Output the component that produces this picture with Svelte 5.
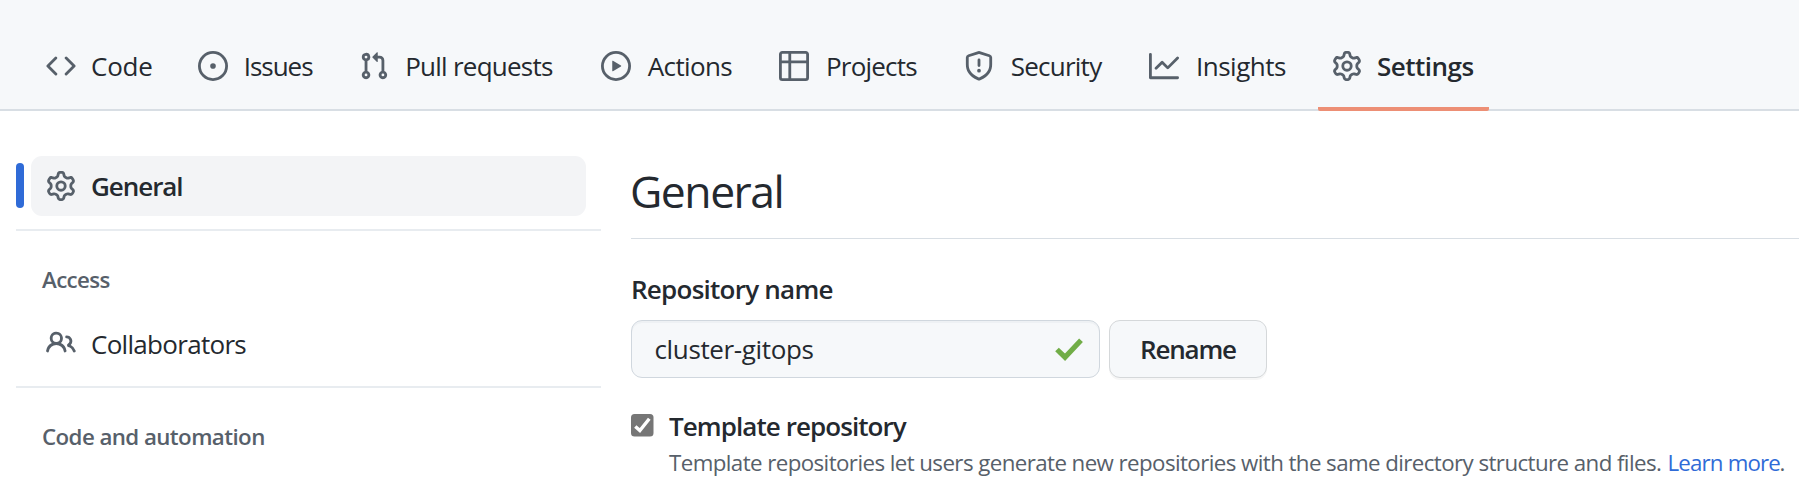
<script>
  const icons = {
    code: 'M4.72 3.22a.75.75 0 011.06 1.06L2.06 8l3.72 3.72a.75.75 0 11-1.06 1.06L.47 8.53a.75.75 0 010-1.06l4.25-4.25zm6.56 0a.75.75 0 10-1.06 1.06L13.94 8l-3.72 3.72a.75.75 0 101.06 1.06l4.25-4.25a.75.75 0 000-1.06l-4.25-4.25z',
    issue: 'M8 9.5a1.5 1.5 0 100-3 1.5 1.5 0 000 3zM8 0a8 8 0 100 16A8 8 0 008 0zM1.5 8a6.5 6.5 0 1113 0 6.5 6.5 0 01-13 0z',
    pull: 'M7.177 3.073L9.573.677A.25.25 0 0110 .854v4.792a.25.25 0 01-.427.177L7.177 3.427a.25.25 0 010-.354zM3.75 2.5a.75.75 0 100 1.5.75.75 0 000-1.5zm-2.25.75a2.25 2.25 0 113 2.122v5.256a2.251 2.251 0 11-1.5 0V5.372A2.25 2.25 0 011.5 3.25zM11 2.5h-1V4h1a1 1 0 011 1v5.628a2.251 2.251 0 101.5 0V5A2.5 2.5 0 0011 2.5zm1 10.25a.75.75 0 111.5 0 .75.75 0 01-1.5 0zM3.75 12a.75.75 0 100 1.5.75.75 0 000-1.5z',
    play: 'M1.5 8a6.5 6.5 0 1113 0 6.5 6.5 0 01-13 0zM8 0a8 8 0 100 16A8 8 0 008 0zM6.379 5.227A.25.25 0 006 5.442v5.117a.25.25 0 00.379.214l4.264-2.559a.25.25 0 000-.428L6.379 5.227z',
    table: 'M0 1.75C0 .784.784 0 1.75 0h12.5C15.216 0 16 .784 16 1.75v12.5A1.75 1.75 0 0114.25 16H1.75A1.75 1.75 0 010 14.25V1.75zM1.5 6.5v7.75c0 .138.112.25.25.25H5v-8H1.5zM5 5H1.5V1.75a.25.25 0 01.25-.25H5V5zm1.5 1.5v8h7.75a.25.25 0 00.25-.25V6.5h-8zm8-1.5h-8V1.5h7.75a.25.25 0 01.25.25V5z',
    shield: 'M7.467.133a1.75 1.75 0 011.066 0l5.25 1.68A1.75 1.75 0 0115 3.48V7c0 1.566-.32 3.182-1.303 4.682-.983 1.498-2.585 2.813-5.032 3.855a1.7 1.7 0 01-1.33 0c-2.447-1.042-4.049-2.357-5.032-3.855C1.32 10.182 1 8.566 1 7V3.48a1.75 1.75 0 011.217-1.667l5.25-1.68zm.61 1.429a.25.25 0 00-.153 0l-5.25 1.68a.25.25 0 00-.174.238V7c0 1.358.275 2.666 1.057 3.86.784 1.194 2.121 2.34 4.366 3.297a.2.2 0 00.154 0c2.245-.956 3.582-2.104 4.366-3.298C13.225 9.666 13.5 8.36 13.5 7V3.48a.25.25 0 00-.174-.237l-5.25-1.68zM9 10.5a1 1 0 11-2 0 1 1 0 012 0zm-.25-5.75a.75.75 0 10-1.5 0v3a.75.75 0 001.5 0v-3z',
    graph: 'M1.5 1.75a.75.75 0 00-1.5 0v12.5c0 .414.336.75.75.75h14.5a.75.75 0 000-1.5H1.5V1.75zm14.28 2.53a.75.75 0 00-1.06-1.06L10 7.94 7.53 5.47a.75.75 0 00-1.06 0L3.22 8.72a.75.75 0 001.06 1.06L7 7.06l2.47 2.47a.75.75 0 001.06 0l5.25-5.25z',
    gear: 'M7.429 1.525a6.593 6.593 0 011.142 0c.036.003.108.036.137.146l.289 1.105c.147.56.55.967.997 1.189.174.086.341.183.501.29.417.278.97.423 1.53.27l1.102-.303c.11-.03.175.016.195.046.219.31.41.641.573.989.014.031.022.11-.059.19l-.815.806c-.411.406-.562.957-.53 1.456a4.588 4.588 0 010 .582c-.032.499.119 1.05.53 1.456l.815.806c.08.08.073.159.059.19a6.494 6.494 0 01-.573.99c-.02.029-.086.074-.195.045l-1.103-.303c-.559-.153-1.112-.008-1.529.27-.16.107-.327.204-.5.29-.449.222-.851.628-.998 1.189l-.289 1.105c-.029.11-.101.143-.137.146a6.613 6.613 0 01-1.142 0c-.036-.003-.108-.037-.137-.146l-.289-1.105c-.147-.56-.55-.967-.997-1.189a4.502 4.502 0 01-.501-.29c-.417-.278-.97-.423-1.53-.27l-1.102.303c-.11.03-.175-.016-.195-.046a6.492 6.492 0 01-.573-.989c-.014-.031-.022-.11.059-.19l.815-.806c.411-.406.562-.957.53-1.456a4.587 4.587 0 010-.582c.032-.499-.119-1.05-.53-1.456l-.815-.806c-.08-.08-.073-.159-.059-.19a6.44 6.44 0 01.573-.99c.02-.029.086-.075.195-.045l1.103.303c.559.153 1.112.008 1.529-.27.16-.107.327-.204.5-.29.449-.222.851-.628.998-1.189l.289-1.105c.029-.11.101-.143.137-.146zM8 0c-.236 0-.47.01-.701.03-.743.065-1.29.615-1.458 1.261l-.29 1.106c-.017.066-.078.158-.211.224a5.994 5.994 0 00-.668.386c-.123.082-.233.09-.3.071L3.27 2.776c-.644-.177-1.392.02-1.82.63a7.977 7.977 0 00-.704 1.217c-.315.675-.111 1.422.363 1.891l.815.806c.05.048.098.147.088.294a6.084 6.084 0 000 .772c.01.147-.038.246-.088.294l-.815.806c-.474.469-.678 1.216-.363 1.891.2.428.436.835.704 1.218.428.609 1.176.806 1.82.63l1.103-.303c.066-.019.176-.011.299.071.213.143.436.272.668.386.133.066.194.158.212.224l.289 1.106c.169.646.715 1.196 1.458 1.26a8.094 8.094 0 001.402 0c.743-.064 1.29-.614 1.458-1.26l.29-1.106c.017-.066.078-.158.211-.224a5.98 5.98 0 00.668-.386c.123-.082.233-.09.3-.071l1.102.302c.644.177 1.392-.02 1.82-.63.268-.382.505-.789.704-1.217.315-.675.111-1.422-.364-1.891l-.814-.806c-.05-.048-.098-.147-.088-.294a6.1 6.1 0 000-.772c-.01-.147.039-.246.088-.294l.814-.806c.475-.469.679-1.216.364-1.891a7.992 7.992 0 00-.704-1.218c-.428-.609-1.176-.806-1.82-.63l-1.103.303c-.066.019-.176.011-.299-.071a5.991 5.991 0 00-.668-.386c-.133-.066-.194-.158-.212-.224L10.16 1.29C9.99.645 9.444.095 8.701.031A8.094 8.094 0 008 0zM9.5 8a1.5 1.5 0 11-3 0 1.5 1.5 0 013 0zM11 8a3 3 0 11-6 0 3 3 0 016 0z',
    people: 'M5.5 3.5a2 2 0 100 4 2 2 0 000-4zM2 5.5a3.5 3.5 0 115.898 2.549 5.507 5.507 0 013.034 4.084.75.75 0 11-1.482.235 4.001 4.001 0 00-7.9 0 .75.75 0 01-1.482-.236A5.507 5.507 0 013.102 8.05 3.49 3.49 0 012 5.5zM11 4a.75.75 0 100 1.5 1.5 1.5 0 01.666 2.844.75.75 0 00-.416.672v.352a.75.75 0 00.574.73c1.2.289 2.162 1.2 2.522 2.372a.75.75 0 101.434-.44 5.01 5.01 0 00-2.56-3.012A3 3 0 0011 4z'
  };

  // width: tab box; gap: icon to label; track: letter spacing
  const tabs = [
    { label: 'Code', icon: 'code', width: 152, gap: 15, track: -0.2 },
    { label: 'Issues', icon: 'issue', width: 160.6, gap: 15.8, track: -1.05 },
    { label: 'Pull requests', icon: 'pull', width: 242.4, gap: 16.6, track: -0.75 },
    { label: 'Actions', icon: 'play', width: 178, gap: 16.8, track: -0.62 },
    { label: 'Projects', icon: 'table', width: 185, gap: 17, track: -0.8 },
    { label: 'Security', icon: 'shield', width: 185, gap: 16.7, track: -0.75 },
    { label: 'Insights', icon: 'graph', width: 184, gap: 17, track: -0.5 },
    { label: 'Settings', icon: 'gear', width: 171, gap: 15, track: -0.5, active: true }
  ];
</script>

{#snippet icon(name)}
  <svg class="icon" viewBox="0 0 16 16" aria-hidden="true"><path fill-rule="evenodd" d={icons[name]} /></svg>
{/snippet}

<div class="page">
  <nav class="tabs">
    {#each tabs as tab}
      <a class="tab" class:active={tab.active} style="width:{tab.width}px;gap:{tab.gap}px;letter-spacing:{tab.track}px">
        {@render icon(tab.icon)}<span>{tab.label}</span>
      </a>
    {/each}
  </nav>

  <div class="body">
    <aside>
      <div class="current">
        <div class="marker"></div>
        <div class="item selected">{@render icon('gear')}<span>General</span></div>
      </div>
      <hr />
      <h3 class="access">Access</h3>
      <div class="item collab">{@render icon('people')}<span>Collaborators</span></div>
      <hr />
      <h3 class="automation">Code and automation</h3>
    </aside>

    <main>
      <h1><span>General</span></h1>
      <div class="name-label">Repository name</div>
      <div class="row">
        <div class="field">
          <span>cluster-gitops</span>
          <svg class="ok" viewBox="0 0 30 24" aria-hidden="true"><path d="M3 12.5L11 20.2L27 3.2" /></svg>
        </div>
        <button><span>Rename</span></button>
      </div>
      <div class="template">
        <svg class="check" viewBox="0 0 23 23" aria-hidden="true">
          <rect width="22.5" height="22.5" rx="3.5" />
          <path d="M4.3 12.4L8.9 16.6L18.3 4.8" />
        </svg>
        <div class="copy">
          <div class="title">Template repository</div>
          <p><span class="desc">Template repositories let users generate new repositories with the same directory structure and files.</span><a class="more">Learn more</a><span>.</span></p>
        </div>
      </div>
    </main>
  </div>
</div>

<style>
  :global(body) { background: #fff; overflow: hidden; }
  .page { height: 486px; overflow: hidden; font: 26px/36px "Open Sans", "Noto Sans", sans-serif; color: #24292f; white-space: nowrap; }
  .page * { box-sizing: border-box; }
  .icon { width: 30px; height: 30px; flex: none; fill: #57606a; }
  .tabs { display: flex; align-items: flex-end; height: 111px; padding-left: 31px; background: #f6f8fa; box-shadow: inset 0 -2px #d8dee4; }
  .tab { display: flex; align-items: center; height: 90px; padding-left: 15px; flex: none; }
  .active { padding-left: 14px; font-weight: 600; background: linear-gradient(#ed8f75, #ed8f75) bottom / 100% 4px no-repeat; border-radius: 2px; }
  .body { display: flex; }
  aside { width: 585px; margin-left: 16px; padding-top: 45px; flex: none; }
  .current { display: flex; align-items: center; height: 60px; gap: 7px; }
  .marker { width: 8px; height: 45px; border-radius: 4px; background: #2f6bd7; margin-top: -1px; }
  .item { display: flex; align-items: center; gap: 15px; padding-left: 15px; }
  .selected { width: 555px; height: 60px; border-radius: 11px; background: #f3f4f6; font-weight: 600; letter-spacing: -1.05px; }
  hr { border: 0; height: 2px; margin: 13px 0 0; background: #e8ecf0; }
  h3 { margin: 0; padding-left: 26px; font-size: 22.3px; line-height: 30px; font-weight: 600; color: #57606a; }
  .access { margin-top: 34px; letter-spacing: -0.6px; }
  .collab { margin: 31px 0 24px 15px; height: 36px; letter-spacing: -0.7px; }
  .collab .icon { margin-top: -2px; }
  .collab + hr { margin-top: 0; }
  .automation { margin-top: 34px; letter-spacing: -0.57px; }
  main { flex: 1; min-width: 0; margin-left: 30px; }
  h1 { margin: 0; padding-top: 50px; height: 128px; font-size: 44.5px; line-height: 60px; font-weight: 400; letter-spacing: -1.5px; border-bottom: 1px solid #d8dee4; text-indent: -1px; }
  .name-label { margin-top: 32px; height: 49px; font-weight: 600; letter-spacing: -0.75px; }
  .row { display: flex; gap: 9px; }
  .field { display: flex; align-items: center; justify-content: space-between; width: 469px; height: 58px; padding: 0 15px 0 22.5px; border: 1px solid #d0d7de; border-radius: 11px; background: #f6f8fa; box-shadow: inset 0 2px rgba(208, 215, 222, .2); letter-spacing: -0.36px; }
  .ok { width: 30px; height: 24px; fill: none; stroke: #71ad47; stroke-width: 5.2; }
  button { width: 158px; height: 58px; padding: 0; border: 1px solid #d5d8da; border-radius: 11px; background: #f6f8fa; box-shadow: 0 2px rgba(27, 31, 36, .04); font: inherit; font-weight: 600; letter-spacing: -1.2px; color: inherit; }
  .template { display: flex; gap: 15px; margin-top: 30px; }
  .check { width: 23px; height: 23px; margin-top: 6px; flex: none; }
  .check rect { fill: #767676; }
  .check path { fill: none; stroke: #fff; stroke-width: 3.4; }
  .title { font-weight: 600; letter-spacing: -0.93px; }
  p { display: flex; margin: 3px 0 0; font-size: 22.3px; line-height: 32px; color: #57606a; }
  .desc { width: 998.5px; letter-spacing: -0.576px; }
  .more { width: 112px; color: #2f6bd7; letter-spacing: -0.83px; }
</style>
